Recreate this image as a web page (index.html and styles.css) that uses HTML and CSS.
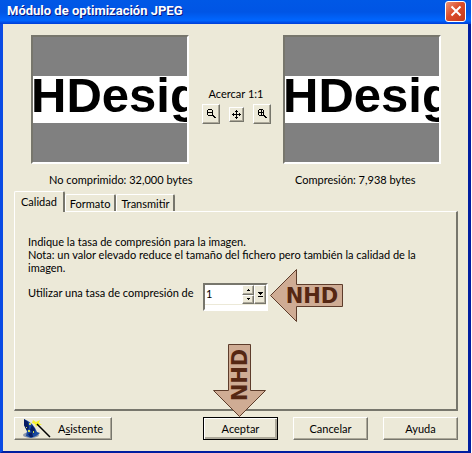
FILE: index.html
```html
<!DOCTYPE html>
<html lang="es">
<head>
<meta charset="utf-8">
<title>Módulo de optimización JPEG</title>
<link rel="stylesheet" href="styles.css">
</head>
<body>
<main class="window">
  <header class="titlebar">
    <h1>Módulo de optimización JPEG</h1>
    <button class="close" type="button" aria-label="Cerrar">
      <svg width="12" height="12" viewBox="0 0 12 12"><path d="M1.5 1.5l9 9M10.5 1.5l-9 9" stroke="#fff" stroke-width="2"/></svg>
    </button>
  </header>
  <div class="content">
    <section class="previews">
      <figure>
        <div class="preview"><div class="strip">HDesig</div></div>
        <figcaption>No comprimido: 32,000 bytes</figcaption>
      </figure>
      <div class="zoom">
        <p>Acercar 1:1</p>
        <div class="zoom-buttons">
          <button class="tool" type="button" aria-label="Alejar">
            <svg width="10" height="10" viewBox="0 0 10 10" shape-rendering="crispEdges"><path d="M2 0h4v1h-4zM1 1h1v5h-1zM6 1h1v5h-1zM2 6h4v1h-4zM2 3h4v1h-4zM6 6h2v1h-2zM7 7h2v1h-2zM8 8h2v1h-2z"/></svg>
          </button>
          <button class="tool small" type="button" aria-label="Mover">
            <svg width="9" height="9" viewBox="0 0 9 9" shape-rendering="crispEdges"><path d="M4 0h1v9h-1zM0 4h9v1h-9zM3 1h3v1h-3zM3 7h3v1h-3zM1 3h1v3h-1zM7 3h1v3h-1z"/></svg>
          </button>
          <button class="tool" type="button" aria-label="Acercar">
            <svg width="10" height="10" viewBox="0 0 10 10" shape-rendering="crispEdges"><path d="M2 0h4v1h-4zM1 1h1v5h-1zM6 1h1v5h-1zM2 6h4v1h-4zM2 3h4v1h-4zM4 1h1v5h-1zM6 6h2v1h-2zM7 7h2v1h-2zM8 8h2v1h-2z"/></svg>
          </button>
        </div>
      </div>
      <figure>
        <div class="preview"><div class="strip">HDesig</div></div>
        <figcaption>Compresión: 7,938 bytes</figcaption>
      </figure>
    </section>

    <div class="tabs" role="tablist">
      <button class="tab active" type="button" role="tab" aria-selected="true">Calidad</button>
      <button class="tab" type="button" role="tab" aria-selected="false">Formato</button>
      <button class="tab" type="button" role="tab" aria-selected="false">Transmitir</button>
    </div>
    <section class="panel" role="tabpanel">
      <p>Indique la tasa de compresión para la imagen.<br>Nota: un valor elevado reduce el tamaño del fichero pero también la calidad de la imagen.</p>
      <div class="rate">
        <label for="rate">Utilizar una tasa de compresión de</label>
        <div class="spinner">
          <div class="spinner-row">
            <input id="rate" type="text" value="1">
            <div class="steps">
              <button type="button" aria-label="Aumentar"><svg width="3" height="2" viewBox="0 0 3 2" shape-rendering="crispEdges"><path d="M1 0h1v1h-1zM0 1h3v1h-3z"/></svg></button>
              <button type="button" aria-label="Reducir"><svg width="3" height="2" viewBox="0 0 3 2" shape-rendering="crispEdges"><path d="M0 0h3v1h-3zM1 1h1v1h-1z"/></svg></button>
            </div>
            <button class="drop" type="button" aria-label="Desplegar"><svg width="5" height="6" viewBox="0 0 5 6" shape-rendering="crispEdges"><path d="M0 0h5v1h-5zM1 1h3v1h-3zM2 2h1v1h-1zM0 4h5v1h-5z"/></svg></button>
          </div>
        </div>
        <svg class="arrow-left" width="76" height="56" viewBox="0 0 76 56">
          <path class="arrow" d="M1.500 27.500L27.500 1.500V16.500H73.500V38.500H27.500V53.500Z"/>
          <text class="mark" x="43" y="35">NHD</text>
        </svg>
      </div>
    </section>

    <footer class="actions">
      <button class="push wizard" type="button">
        <svg width="28" height="19" viewBox="0 0 28 19">
          <ellipse cx="8" cy="16" rx="8" ry="3" fill="#8996ac"/>
          <path d="M1 0L5 2L9 5L12 9L14 13L17 14L13 17L8 19L3 17L4 12L1 6Z" fill="#18499f"/>
          <path d="M1 0L5 3L6 9L4 12L1 6ZM9 6l3 4-1 5-4-4zM5 15l4-2 1 5-3 0z" fill="#071c62"/>
          <path d="M6 4h2v2h-2zM5 11h2v2h-2zM10 12h1v2h-1zM3 8h1v1h-1z" fill="#d3df51"/>
          <path d="M10 1l3 2 4-2-1 3 3 2-4 0-2 2-1-3-3-1z" fill="#f7f52c"/>
          <path d="M14 5L27 18" stroke="#000" stroke-width="1.500"/>
        </svg>
        <span>A<u>s</u>istente</span>
      </button>
      <div class="accept">
        <button class="push default" type="button">Aceptar</button>
        <svg class="arrow-down" width="56" height="75" viewBox="0 0 56 75">
          <path class="arrow" d="M16.500 1.500H38.500V47.500H53.500L27.500 73.500L1.500 47.500H16.500Z"/>
          <text class="mark" transform="translate(35 32) rotate(-90)">NHD</text>
        </svg>
      </div>
      <button class="push" type="button">Cancelar</button>
      <button class="push" type="button">Ayuda</button>
    </footer>
  </div>
</main>
</body>
</html>
```
FILE: styles.css
```css
* { box-sizing: border-box; }

body {
  margin: 0;
  padding-right: 1px;
  background: #fff;
  color: #000;
  font: 11px/13px Lato, "Liberation Sans", sans-serif;
}

button, input { font: inherit; color: inherit; }
button { padding: 0; background: #ece9d8; }
h1, p, figure { margin: 0; }
svg { display: block; }

.window {
  display: flex;
  flex-direction: column;
  min-height: 100vh;
  border: solid;
  border-width: 0 3px 2px;
  border-color: #0831d9 #001ea0 #001ea0 #0a4be4;
  background: #ece9d8;
}

.titlebar {
  display: flex;
  align-items: center;
  justify-content: space-between;
  height: 24px;
  margin: 0 -3px;
  padding: 0 5px 2px 7px;
  background: linear-gradient(#0058e6, #0055e5 50%, #0066ff 85%, #003dd7);
}

.titlebar h1 {
  color: #fff;
  font: bold 13px/16px Roboto, sans-serif;
  text-shadow: 1px 1px #0a1883;
}

.close {
  display: grid;
  place-items: center;
  width: 21px;
  height: 21px;
  border: 1px solid #fff;
  border-radius: 3px;
  background: linear-gradient(135deg, #ec9479, #dc4d2a 45%, #c4391b);
}

.content {
  display: flex;
  flex: 1;
  flex-direction: column;
  padding: 11px 10px 11px 11px;
}

.previews {
  display: flex;
  justify-content: space-between;
  padding: 0 17px;
}

figure { width: 158px; }

.preview {
  height: 129px;
  padding-top: 39px;
  overflow: hidden;
  border: 2px solid;
  border-color: #77766c #fff #fff #77766c;
  background: #808080;
}

.strip {
  height: 47px;
  background: #fff;
  font: bold 49px/39px "Liberation Sans", Arial, sans-serif;
  text-indent: -2px;
}

figcaption {
  padding: 9px 0 0 18px;
  white-space: nowrap;
}

figure:last-child figcaption { padding-left: 12px; }

.zoom {
  display: flex;
  flex-direction: column;
  align-items: center;
  gap: 4px;
  padding-top: 52px;
}

.zoom-buttons {
  display: flex;
  align-items: center;
  gap: 9px;
}

.tool, .steps button, .drop {
  display: grid;
  place-items: center;
  border: 1px solid;
  border-color: #fff #77766c #77766c #fff;
  box-shadow: inset -1px -1px #aca899;
}

.tool { width: 18px; height: 20px; }
.tool.small { width: 15px; height: 15px; }

.tabs {
  display: flex;
  align-items: flex-end;
  margin-top: 5px;
}

.tab {
  height: 17px;
  padding: 0 4px;
  border: solid;
  border-width: 1px 2px 0 1px;
  border-color: #fff #77766c #fff #fff;
  border-radius: 2px 2px 0 0;
}

.tab.active {
  z-index: 1;
  height: 21px;
  margin-bottom: -1px;
  padding: 0 6px 2px;
}

.panel {
  flex: 1;
  padding: 23px 30px 0 13px;
  border: solid;
  border-width: 1px 2px 2px 1px;
  border-color: #fff #77766c #77766c #fff;
}

.rate {
  position: relative;
  display: grid;
  grid-template-columns: 175px 65px;
  align-items: start;
  margin-top: 9px;
}

.rate label { padding-top: 3px; }

.spinner {
  height: 28px;
  border: 2px solid;
  border-color: #77766c #fff #fff #77766c;
  background: #fff;
}

.spinner-row {
  display: flex;
  height: 20px;
  border-bottom: 1px solid #ece9d8;
}

.spinner input {
  flex: 1;
  min-width: 0;
  padding: 0 1px 3px;
  border: 0;
  background: #fff;
}

.steps { display: grid; width: 12px; }
.drop { width: 12px; }

.arrow-left {
  position: absolute;
  top: -15px;
  left: 241px;
}

.arrow { fill: #cfac94; stroke: #5d3c2b; }

.mark {
  fill: #552713;
  font: bold 21px "DejaVu Sans", sans-serif;
  text-anchor: middle;
}

.actions {
  display: flex;
  gap: 15px;
  margin-top: 6px;
}

.push {
  width: 75px;
  height: 23px;
  border: 1px solid;
  border-color: #fff #77766c #77766c #fff;
  box-shadow: inset -1px -1px #aca899;
}

.wizard {
  display: flex;
  align-items: center;
  gap: 7px;
  width: 98px;
  margin-right: auto;
  padding-left: 8px;
}

.accept { position: relative; }

.default {
  border-color: #000;
  box-shadow: inset 1px 1px #fff, inset -2px -2px #aca899;
}

.arrow-down {
  position: absolute;
  bottom: 22px;
  left: 9px;
}
```
